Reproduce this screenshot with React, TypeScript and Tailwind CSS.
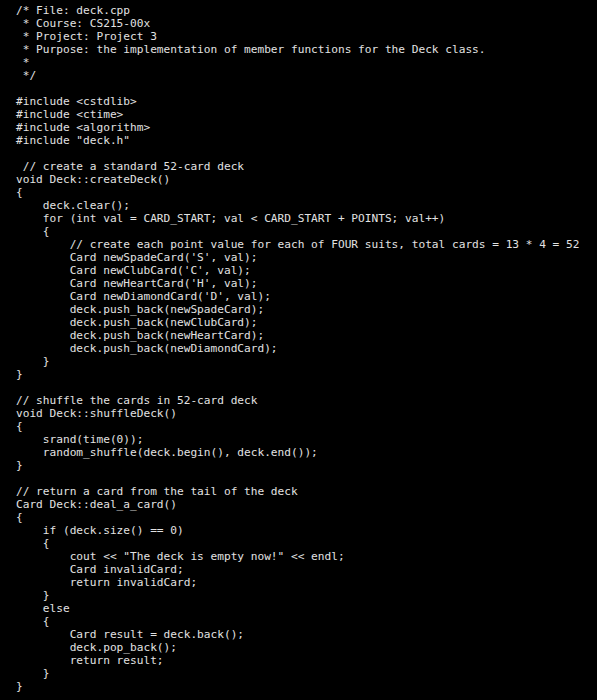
const code = `/* File: deck.cpp
 * Course: CS215-00x
 * Project: Project 3
 * Purpose: the implementation of member functions for the Deck class.
 *
 */

#include <cstdlib>
#include <ctime>
#include <algorithm>
#include "deck.h"

 // create a standard 52-card deck
void Deck::createDeck()
{
    deck.clear();
    for (int val = CARD_START; val < CARD_START + POINTS; val++)
    {
        // create each point value for each of FOUR suits, total cards = 13 * 4 = 52
        Card newSpadeCard('S', val);
        Card newClubCard('C', val);
        Card newHeartCard('H', val);
        Card newDiamondCard('D', val);
        deck.push_back(newSpadeCard);
        deck.push_back(newClubCard);
        deck.push_back(newHeartCard);
        deck.push_back(newDiamondCard);
    }
}

// shuffle the cards in 52-card deck
void Deck::shuffleDeck()
{
    srand(time(0));
    random_shuffle(deck.begin(), deck.end());
}

// return a card from the tail of the deck
Card Deck::deal_a_card()
{
    if (deck.size() == 0)
    {
        cout << "The deck is empty now!" << endl;
        Card invalidCard;
        return invalidCard;
    }
    else
    {
        Card result = deck.back();
        deck.pop_back();
        return result;
    }
}`

export default function App() {
  return (
    <div className="w-[597px] h-[700px] bg-black overflow-hidden">
      <pre className="pl-4 pt-[4px] m-0 text-[11.15px] leading-[13px] text-[#e2e2e2] font-['DejaVu_Sans_Mono','Liberation_Mono',monospace] whitespace-pre">
        {code}
      </pre>
    </div>
  )
}
